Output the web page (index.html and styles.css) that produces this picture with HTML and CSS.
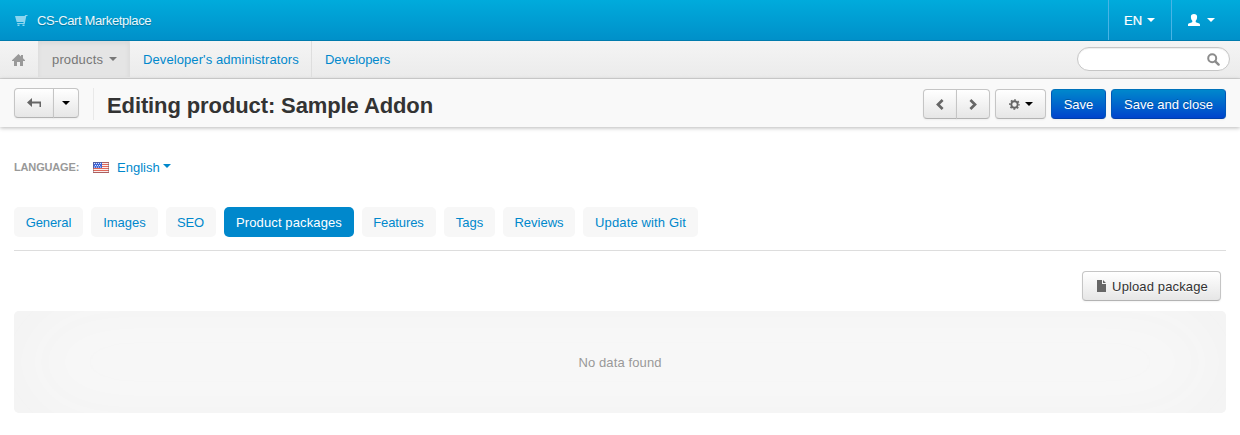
FILE: index.html
```html
<!DOCTYPE html>
<html lang="en">
<head>
<meta charset="utf-8">
<title>Editing product: Sample Addon</title>
<link rel="stylesheet" href="styles.css">
</head>
<body>
<header class="topbar">
  <a class="brand">
    <svg class="cart" width="14" height="14" viewBox="0 0 14 14"><path d="M0 2h9.500L10.500 1H12.500v1h-1.200L9.700 10H2.300L2 9h6.500V8H1.700z"/><path d="M2.500 10.500h2v1.500h-2zM7.500 10.500h2v1.500h-2z"/></svg>
    <span>CS-Cart Marketplace</span>
  </a>
  <div class="top-item lang"><span>EN</span><i class="caret"></i></div>
  <div class="top-item account"><svg width="12" height="12" viewBox="0 0 12 12"><path d="M6 0C4 0 2.900 1 2.900 2.700c0 1.800.5 3.300 1.400 4.100v1.300C4 8.900 0 8.900 0 10.800V12h12v-1.200c0-1.900-4-1.900-4.300-2.700V6.800c.9-.8 1.400-2.300 1.400-4.100C9.100 1 8 0 6 0z"/></svg><i class="caret"></i></div>
</header>
<nav class="menu">
  <a class="home"><svg width="13" height="12" viewBox="0 0 13 12"><path d="M6.500 0 0 6.300V7h2v5h3V8h3v4h3V7h2v-.7L11 4.300V1H9v1.400z"/></svg></a>
  <a class="menu-item active"><span>products</span><i class="caret"></i></a>
  <a class="menu-item admins"><span>Developer's administrators</span></a>
  <a class="menu-item devs"><span>Developers</span></a>
  <div class="search"><svg width="13" height="13" viewBox="0 0 13 13"><circle cx="5.200" cy="5.200" r="4" fill="none" stroke="#8c8c8c" stroke-width="2"/><path d="M8.300 8.300l3.300 3.300" stroke="#8c8c8c" stroke-width="2.400" stroke-linecap="round"/></svg></div>
</nav>
<section class="titlebar">
  <div class="group">
    <a class="btn back"><svg width="14" height="10" viewBox="0 0 14 10"><path d="M0 4.500 5 0v3.500h9V9h-1.500V5.500H5V9z" fill="#666"/></svg></a>
    <a class="btn drop"><i class="caret"></i></a>
  </div>
  <h1><span>Editing product: Sample Addon</span></h1>
  <div class="actions">
    <div class="group">
      <a class="btn step"><svg width="8" height="11" viewBox="0 0 8 11"><path d="M6.600 1 2 5.500 6.600 10" fill="none" stroke="#666" stroke-width="2.700"/></svg></a>
      <a class="btn step"><svg width="8" height="11" viewBox="0 0 8 11"><path d="M1.400 1 6 5.500 1.400 10" fill="none" stroke="#666" stroke-width="2.700"/></svg></a>
    </div>
    <a class="btn tools"><svg width="11" height="11" viewBox="0 0 11 11"><circle cx="5.500" cy="5.500" r="3.200" fill="none" stroke="#666" stroke-width="1.900"/><circle cx="5.500" cy="5.500" r="4.600" fill="none" stroke="#666" stroke-width="1.500" stroke-dasharray="1.810 1.803" stroke-dashoffset=".9"/></svg><i class="caret"></i></a>
    <a class="btn primary save"><span>Save</span></a>
    <a class="btn primary save-close"><span>Save and close</span></a>
  </div>
</section>
<main>
  <div class="language">
    <span class="label">Language:</span>
    <svg class="flag" width="16" height="11" viewBox="0 0 16 11"><path fill="#f9eeee" d="M0 0h16v11H0z"/><path d="M0 .5h16M0 2.500h16M0 4.500h16M0 6.500h16M0 8.500h16M0 10.500h16" stroke="#e0685a"/><path fill="#3e66d8" d="M0 0h9v6H0z"/><path d="M1 1.500h7M2 3.500h6M1 5.100h7" stroke="#dce6ff" stroke-dasharray="1 1"/><path d="M0 .5h16M0 10.500h16M.5 0v11M15.500 0v11" stroke="#6e5566" opacity=".45"/></svg>
    <a class="english">English</a><i class="caret"></i>
  </div>
  <div class="tabs">
    <a class="tab general"><span>General</span></a>
    <a class="tab images"><span>Images</span></a>
    <a class="tab seo"><span>SEO</span></a>
    <a class="tab packages selected"><span>Product packages</span></a>
    <a class="tab features"><span>Features</span></a>
    <a class="tab tags"><span>Tags</span></a>
    <a class="tab reviews"><span>Reviews</span></a>
    <a class="tab git"><span>Update with Git</span></a>
  </div>
  <div class="toolbar"><a class="btn upload"><svg width="9" height="12" viewBox="0 0 9 12"><path d="M0 0h5v4h4v8H0zM6 0l3 3H6z" fill="#666"/></svg><span>Upload package</span></a></div>
  <p class="no-items"><span>No data found</span></p>
</main>
</body>
</html>
```
FILE: styles.css
```css
* { box-sizing: border-box; }
body { margin: 0; background: #fff; color: #333; font: 13px/20px "Liberation Sans", Arial, sans-serif; }
svg { display: block; flex: none; }
span, h1, .english { white-space: nowrap; }
.caret { display: block; flex: none; width: 0; height: 0; border: 4px solid transparent; border-top-color: currentColor; border-bottom: 0; }

.topbar { display: flex; height: 41px; color: #fff; background: linear-gradient(#00abdc, #0090c9); border-bottom: 1px solid #007bad; }
.brand { flex: 1; display: flex; align-items: center; gap: 8px; padding-left: 15px; color: #eaf7fc; letter-spacing: -.38px; text-shadow: 0 1px 1px rgba(0,0,0,.25); }
.brand span, .lang span { padding-top: 2px; }
.cart { fill: #8cd5ef; margin-top: 1px; }
.top-item { display: flex; align-items: center; border-left: 1px solid #49b4e5; }
.lang { width: 63px; padding-left: 15px; gap: 5px; }
.lang span { -webkit-text-stroke: .2px; }
.account { width: 69px; padding-left: 16px; gap: 7px; }
.account svg { fill: #fff; }

.menu { display: flex; height: 38px; background: linear-gradient(#f4f4f4, #ebebeb); border-bottom: 1px solid #d5d5d5; }
.home { width: 38px; padding: 13px 0 0 12px; }
.home svg { fill: #999; }
.menu-item { display: flex; align-items: center; height: 36px; color: #08c; border-right: 1px solid #dedede; }
.menu-item span { padding-top: 2px; }
.active { width: 92px; padding-left: 14px; gap: 6px; color: #777; background: #e5e5e5; box-shadow: inset 0 2px 5px rgba(0,0,0,.06); letter-spacing: .15px; }
.admins { width: 182px; padding-left: 13px; letter-spacing: .09px; }
.devs { padding-left: 13px; border: 0; letter-spacing: -.05px; }
.search { display: flex; width: 153px; height: 24px; margin: 6px 10px 0 auto; padding: 5px 9px 0 0; justify-content: flex-end; background: #fff; border: 1px solid #c6c6c6; border-radius: 12px; box-shadow: inset 0 1px 1px rgba(0,0,0,.07); }

.titlebar { display: flex; height: 48px; padding: 9px 14px 0; background: #f9f9f9; box-shadow: 0 1px 4px rgba(0,0,0,.28); }
h1 { margin: 0 0 0 14px; padding-left: 13px; height: 32px; border-left: 1px solid #e9e9e9; font-size: 22px; line-height: 35px; letter-spacing: -.11px; }
.actions { display: flex; margin: 1px 0 0 auto; }
.group { display: flex; }
.btn { display: flex; align-items: center; justify-content: center; height: 30px; color: #333; background: linear-gradient(#fff, #e6e6e6); border: 1px solid #c5c5c5; border-bottom-color: #b3b3b3; border-radius: 4px; box-shadow: 0 1px 2px rgba(0,0,0,.05); text-shadow: 0 1px 1px rgba(255,255,255,.75); }
.btn span, .tab span { padding-top: 2px; }
.group .btn:first-child { border-radius: 4px 0 0 4px; }
.group .btn:last-child { border-radius: 0 4px 4px 0; margin-left: -1px; }
.btn .caret { color: #000; }
.back { width: 40px; }
.drop { width: 26px; }
.step { width: 34px; }
.tools { width: 51px; margin-left: 5px; gap: 5px; }
.primary { color: #fff; background: linear-gradient(#08c, #04c); border-color: #0072bb #0057b8 #003ea8; text-shadow: 0 -1px 0 rgba(0,0,0,.25); margin-left: 5px; }
.save { width: 55px; }
.save-close { width: 115px; }

main { padding: 30px 14px 0; }
.language { display: flex; align-items: center; height: 20px; color: #08c; }
.label { width: 79px; color: #999; font-size: 11px; font-weight: bold; text-transform: uppercase; letter-spacing: -.16px; }
.english { margin: 0 3px 0 8px; padding-top: 2px; }
.language .caret { margin-top: -3px; }
.tabs { display: flex; gap: 8px; height: 44px; margin-top: 30px; border-bottom: 1px solid #ddd; }
.tab { display: flex; align-items: center; justify-content: center; height: 30px; border-radius: 5px; background: #f7f7f7; color: #08c; }
.general { width: 69px; letter-spacing: -.1px; }
.images { width: 67px; }
.seo { width: 50px; padding-right: 1px; letter-spacing: -.2px; }
.packages { width: 130px; letter-spacing: .12px; }
.features { width: 74px; padding-right: 1px; letter-spacing: -.1px; }
.tags { width: 51px; }
.reviews { width: 72px; }
.git { width: 115px; letter-spacing: .14px; }
.selected { background: #08c; color: #fff; }
.toolbar { display: flex; justify-content: flex-end; padding: 20px 5px 0 0; }
.upload { width: 139px; padding-left: 2px; gap: 6px; letter-spacing: .13px; }
.no-items { display: flex; align-items: center; justify-content: center; height: 102px; margin: 10px 0 0; padding-top: 2px; border-radius: 5px; color: #999; background: #fafafa; box-shadow: inset 0 0 100px #f1f1f1; letter-spacing: .12px; }
```
